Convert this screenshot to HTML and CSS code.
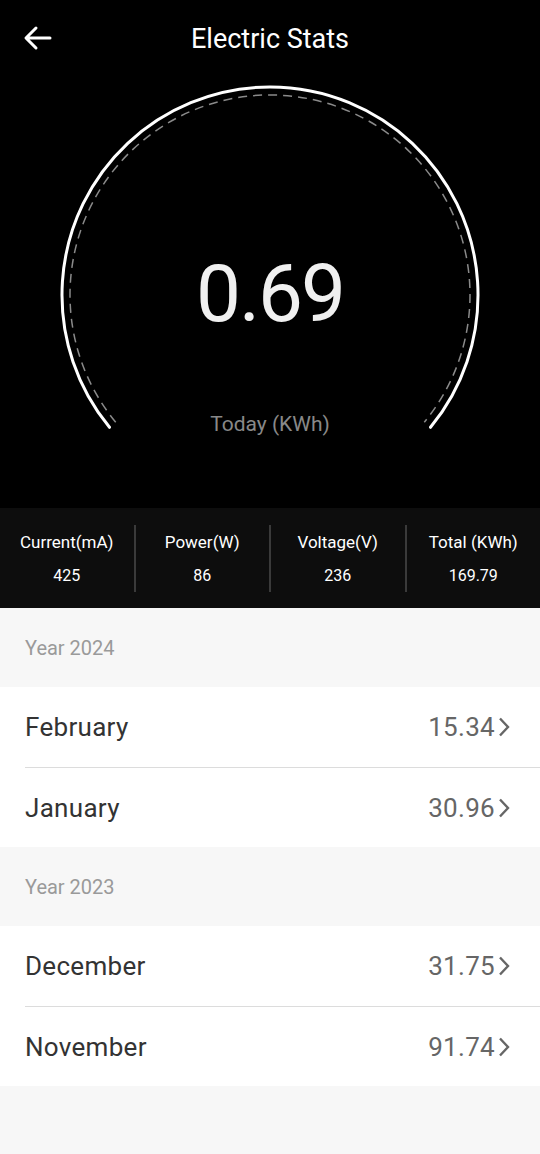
FILE: index.html
```html
<!DOCTYPE html>
<html>
<head>
    <title>Electric Stats</title>
    <link rel="stylesheet" href="styles.css">
</head>
<body>
    <div class="top">
        <div class="appbar">
            <svg class="back" width="30" height="26" viewBox="0 0 30 26">
                <path d="M27 13 H4 M13 3 L3 13 L13 23" fill="none" stroke="#fff" stroke-width="3" stroke-linecap="round" stroke-linejoin="round"/>
            </svg>
            <div class="appbar-title">Electric Stats</div>
        </div>
        <div class="gauge">
            <svg class="gauge-arc" width="540" height="430" viewBox="0 0 540 430">
                <path d="M115.7 344.2 A200 200 0 1 1 424.3 344.2" fill="none" stroke="#8a8a8a" stroke-width="1.5" stroke-dasharray="9 6"/>
                <path d="M109.5 349.3 A208 208 0 1 1 430.5 349.3" fill="none" stroke="#fff" stroke-width="3" stroke-linecap="round"/>
            </svg>
            <div class="gauge-value">0.69</div>
            <div class="gauge-label">Today (KWh)</div>
        </div>
    </div>

    <div class="stats">
        <div class="stat">
            <div class="stat-name">Current(mA)</div>
            <div class="stat-val">425</div>
        </div>
        <div class="stat">
            <div class="stat-name">Power(W)</div>
            <div class="stat-val">86</div>
        </div>
        <div class="stat">
            <div class="stat-name">Voltage(V)</div>
            <div class="stat-val">236</div>
        </div>
        <div class="stat">
            <div class="stat-name">Total (KWh)</div>
            <div class="stat-val">169.79</div>
        </div>
    </div>

    <div class="history">
        <div class="year">Year 2024</div>
        <div class="months">
            <div class="month">
                <span class="month-name">February</span>
                <span class="month-val">15.34</span>
                <svg class="chev" width="12" height="20" viewBox="0 0 12 20"><path d="M2 1.5 L10 10 L2 18.5" fill="none" stroke="#666" stroke-width="2.4"/></svg>
            </div>
            <div class="month">
                <span class="month-name">January</span>
                <span class="month-val">30.96</span>
                <svg class="chev" width="12" height="20" viewBox="0 0 12 20"><path d="M2 1.5 L10 10 L2 18.5" fill="none" stroke="#666" stroke-width="2.4"/></svg>
            </div>
        </div>
        <div class="year">Year 2023</div>
        <div class="months">
            <div class="month">
                <span class="month-name">December</span>
                <span class="month-val">31.75</span>
                <svg class="chev" width="12" height="20" viewBox="0 0 12 20"><path d="M2 1.5 L10 10 L2 18.5" fill="none" stroke="#666" stroke-width="2.4"/></svg>
            </div>
            <div class="month">
                <span class="month-name">November</span>
                <span class="month-val">91.74</span>
                <svg class="chev" width="12" height="20" viewBox="0 0 12 20"><path d="M2 1.5 L10 10 L2 18.5" fill="none" stroke="#666" stroke-width="2.4"/></svg>
            </div>
        </div>
    </div>
</body>
</html>
```

FILE: styles.css
```css
body {
    margin: 0;
    font-family: Roboto, 'Noto Sans', sans-serif;
    background: #f7f7f7;
    width: 540px;
    min-height: 1154px;
}
.top {
    background: #000;
    color: #fff;
}
.appbar {
    height: 78px;
    display: flex;
    align-items: center;
    justify-content: center;
    position: relative;
}
.back {
    position: absolute;
    left: 23px;
    top: 25px;
}
.appbar-title {
    font-size: 27px;
}
.gauge {
    height: 430px;
    position: relative;
}
.gauge-arc {
    display: block;
}
.gauge-value {
    position: absolute;
    left: 0;
    right: 0;
    top: 166px;
    text-align: center;
    font-size: 80px;
    font-weight: 400;
    letter-spacing: -2px;
    line-height: 100px;
    color: #f0f0f0;
}
.gauge-label {
    position: absolute;
    left: 0;
    right: 0;
    top: 333px;
    text-align: center;
    font-size: 21px;
    line-height: 26px;
    color: #888;
}
.stats {
    display: flex;
    background: #0d0d0d;
    height: 100px;
    align-items: center;
}
.stat {
    flex: 1;
    text-align: center;
    color: #fff;
    height: 67px;
    display: flex;
    flex-direction: column;
    justify-content: center;
    gap: 14px;
    border-left: 2px solid #3a3a3a;
}
.stat:first-child {
    border-left: none;
}
.stat-name {
    font-size: 17px;
    line-height: 20px;
}
.stat-val {
    font-size: 16px;
    line-height: 19px;
}
.year {
    height: 79px;
    display: flex;
    align-items: center;
    padding-left: 25px;
    font-size: 20px;
    color: #9a9a9a;
}
.months {
    background: #fff;
}
.month {
    height: 80px;
    display: flex;
    align-items: center;
    margin-left: 25px;
    padding-right: 30px;
    border-top: 1px solid #dcdcdc;
    box-sizing: border-box;
}
.month:first-child {
    border-top: none;
}
.month-name {
    flex: 1;
    font-size: 26px;
    letter-spacing: 0.3px;
    color: #333;
}
.month-val {
    font-size: 26px;
    letter-spacing: 0.3px;
    color: #666;
    margin-right: 3px;
}
.chev {
    display: block;
}
```
